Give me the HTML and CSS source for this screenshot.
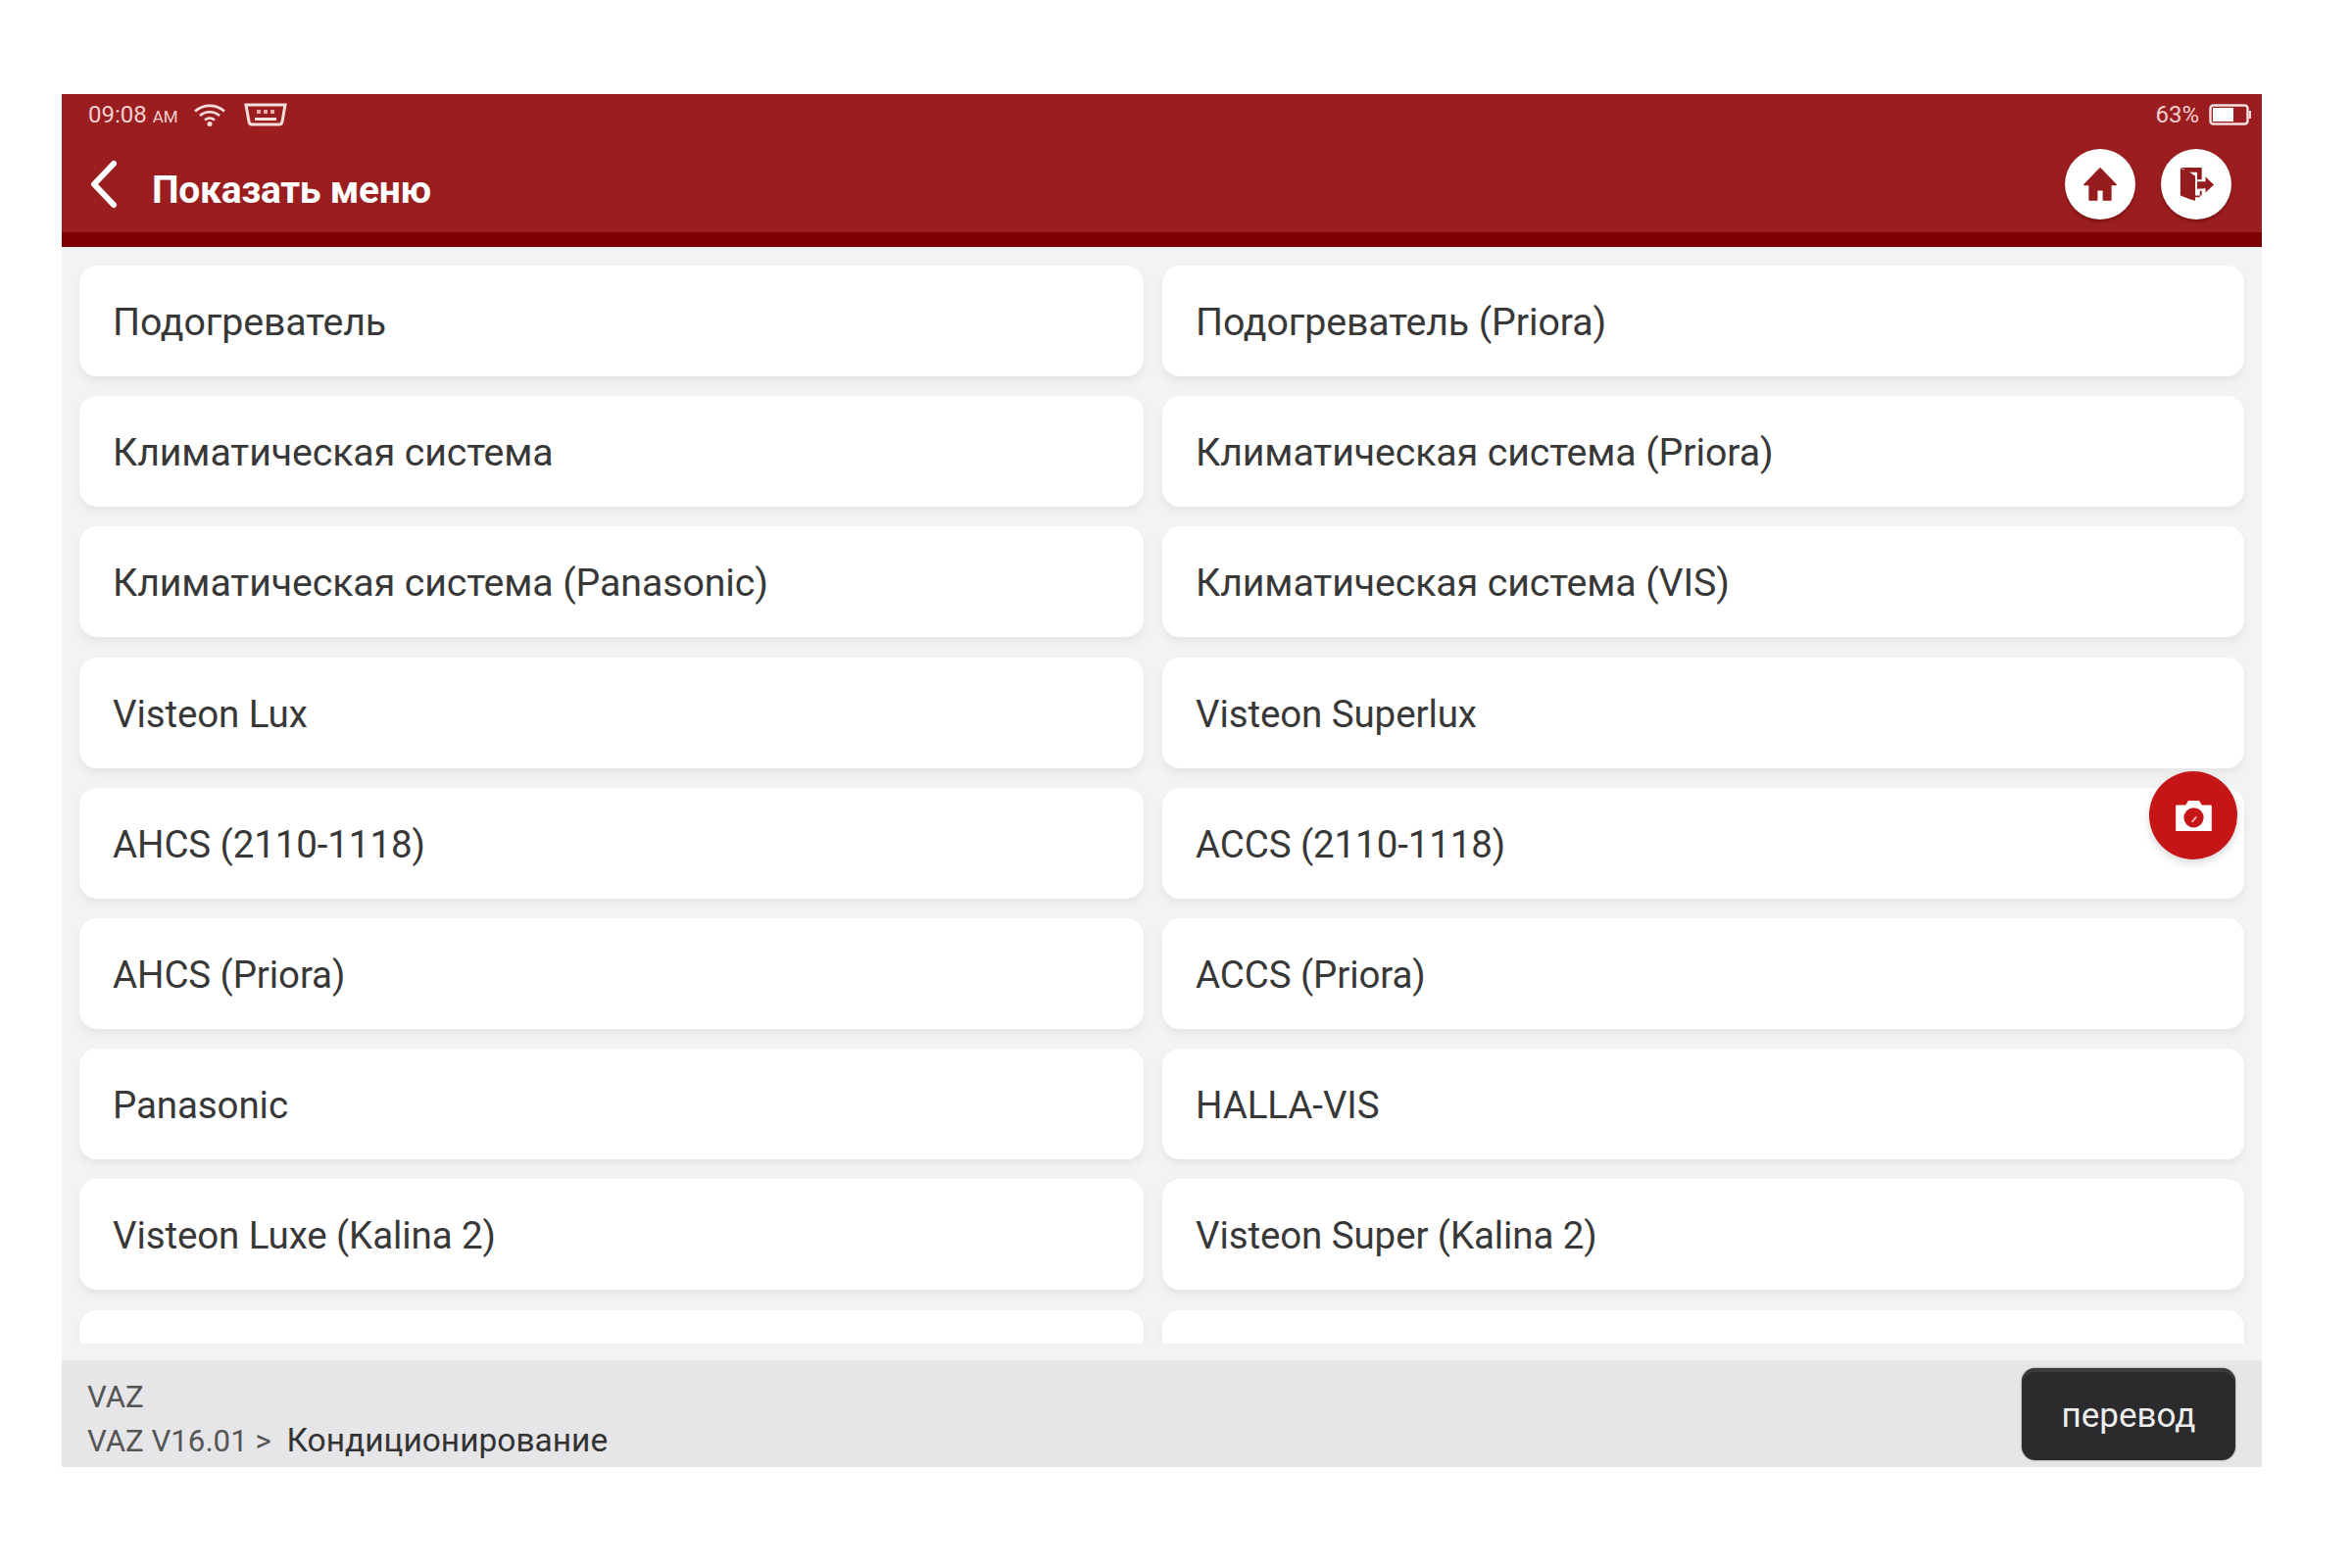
FILE: index.html
```html
<!DOCTYPE html>
<html lang="ru">
<head>
<meta charset="utf-8">
<title>Показать меню</title>
<link rel="stylesheet" href="styles.css">
</head>
<body>
<div class="app">
  <header class="header">
    <div class="status">
      <div class="status-group">
        <span class="time">09:08 <small>AM</small></span>
        <svg class="wifi" viewBox="0 0 34 24"><g fill="none" stroke="#f6dede" stroke-width="2.6"><path d="M2 8.500c9-7.500 21-7.500 30 0"/><path d="M7 13c6-5 14-5 20 0"/><path d="M12 17.500c3-2.500 7-2.500 10 0"/></g><circle cx="17" cy="21.500" r="2.500" fill="#f6dede"/></svg>
        <svg class="vci" viewBox="0 0 44 24"><path d="M2 2h40l-3 17q-.5 3-3 3H8q-2.500 0-3-3z" fill="none" stroke="#f6dede" stroke-width="3"/><path d="M11 15h22v3H11z" fill="#f6dede"/><path d="M13 7h4v4h-4zM20 7h4v4h-4zM27 7h4v4h-4z" fill="#e9aaaa"/></svg>
      </div>
      <div class="status-group">
        <span class="time">63%</span>
        <svg class="battery" viewBox="0 0 44 22"><rect x="1.500" y="1.500" width="38" height="19" rx="3" fill="none" stroke="#f6dede" stroke-width="2.500"/><rect x="4" y="4" width="21" height="14" fill="#fff"/><path d="M41 7h2v8h-2z" fill="#f6dede"/></svg>
      </div>
    </div>
    <div class="titlebar">
      <svg class="back" viewBox="0 0 30 50"><path d="M25 4 5 25l20 21" fill="none" stroke="#fff" stroke-width="6" stroke-linecap="round" stroke-linejoin="round"/></svg>
      <h1 class="title">Показать меню</h1>
      <div class="actions">
        <span class="round-btn"><svg viewBox="0 0 40 40"><path d="M20 3 3 20.500h5.500V37h8V26h7v11h8V20.500H37z" fill="#951c1e" stroke="#951c1e" stroke-width="1.500" stroke-linejoin="round"/></svg></span>
        <span class="round-btn"><svg viewBox="0 0 40 40"><path d="M3 2h23v13h-5V7H12l7 4v21h7v-5h-2v7h-5v4l-12-5V4z" fill="#951c1e"/><path d="M3 3l13 6v28L3 32z" fill="#951c1e"/><path d="M21 25v-8h9v-5l9 8.500-9 8.500v-4.500z" fill="#951c1e"/></svg></span>
      </div>
    </div>
  </header>
  <main class="main">
    <div class="list">
      <div class="card card-ru">Подогреватель</div><div class="card card-ru">Подогреватель (Priora)</div>
      <div class="card card-ru">Климатическая система</div><div class="card card-ru">Климатическая система (Priora)</div>
      <div class="card card-ru">Климатическая система (Panasonic)</div><div class="card card-ru">Климатическая система (VIS)</div>
      <div class="card">Visteon Lux</div><div class="card">Visteon Superlux</div>
      <div class="card">AHCS (2110-1118)</div><div class="card">ACCS (2110-1118)</div>
      <div class="card">AHCS (Priora)</div><div class="card">ACCS (Priora)</div>
      <div class="card">Panasonic</div><div class="card">HALLA-VIS</div>
      <div class="card">Visteon Luxe (Kalina 2)</div><div class="card">Visteon Super (Kalina 2)</div>
      <div class="card"></div><div class="card"></div>
    </div>
  </main>
  <footer class="footer">
    <div class="crumbs">
      <div>VAZ</div>
      <div>VAZ V16.01 &gt; <span class="crumb-current">Кондиционирование</span></div>
    </div>
    <button class="translate">перевод</button>
  </footer>
  <span class="camera"><svg viewBox="0 0 44 36"><path d="M3 6h10l3-5h12l3 5h10a1 1 0 0 1 1 1v27a1 1 0 0 1-1 1H3a1 1 0 0 1-1-1V7a1 1 0 0 1 1-1z" fill="#fff"/><circle cx="22" cy="20" r="11" fill="#c51517"/><path d="M20 25l5-6" stroke="#f3b0b0" stroke-width="2"/></svg></span>
</div>
</body>
</html>
```
FILE: styles.css
```css
* { box-sizing: border-box; }
html, body { margin: 0; background: #fff; }
body { padding: 96px 92px 103px 63px; font-family: Roboto, "Noto Sans", sans-serif; }
.app {
  position: relative;
  width: 2245px;
  height: 1401px;
  display: flex;
  flex-direction: column;
  background: #f3f3f4;
}
.header {
  height: 156px;
  flex: none;
  background: #9a1e1f;
  border-bottom: 15px solid #7d0000;
  color: #fff;
}
.status {
  height: 42px;
  padding: 0 10px 0 27px;
  display: flex;
  align-items: center;
  justify-content: space-between;
}
.status-group { display: flex; align-items: center; }
.time { font-size: 24px; color: #f3cfcf; }
.time small { font-size: 17px; }
.wifi { width: 34px; height: 24px; margin-left: 15px; }
.vci { width: 44px; height: 24px; margin-left: 18px; }
.battery { width: 44px; height: 22px; margin-left: 10px; }
.titlebar {
  height: 99px;
  display: flex;
  align-items: center;
  padding: 0 31px 0 28px;
}
.back { width: 30px; height: 50px; }
.title {
  margin: 12px 0 0 34px;
  font-size: 39px;
  font-weight: 700;
  letter-spacing: -0.3px;
}
.actions { margin-left: auto; display: flex; gap: 26px; }
.round-btn {
  width: 72px;
  height: 72px;
  border-radius: 50%;
  background: #fff;
  display: flex;
  align-items: center;
  justify-content: center;
  box-shadow: 0 2px 3px rgba(90, 0, 0, .5);
}
.round-btn svg { width: 38px; height: 38px; }
.main { flex: 1; padding: 0 0 17px; min-height: 0; }
.list {
  height: 100%;
  overflow: hidden;
  padding: 19px 18px 0;
  display: grid;
  grid-template-columns: 1086px 1104px;
  grid-auto-rows: 113px;
  column-gap: 19px;
  row-gap: 20.200px;
}
.card {
  display: flex;
  align-items: center;
  padding: 2px 34px 0;
  background: #fff;
  border-radius: 18px;
  font-size: 38.500px;
  letter-spacing: -0.1px;
  color: #383838;
  box-shadow: 0 5px 8px rgba(0, 0, 0, .06);
}
.card-ru { font-size: 39.300px; }
.footer {
  height: 109px;
  flex: none;
  background: #e6e6e8;
  padding: 6px 27px 6px 26px;
  display: flex;
  align-items: center;
  justify-content: space-between;
}
.crumbs { font-size: 31.200px; line-height: 44px; color: #555; padding-top: 12px; }
.crumb-current { font-size: 33.500px; color: #333; margin-left: 8px; }
.translate {
  width: 218px;
  height: 94px;
  padding-top: 4px;
  border: 0;
  border-radius: 14px;
  background: #2b2b2d;
  color: #eee;
  font: 35px Roboto, sans-serif;
  box-shadow: inset 0 4px 0 #3c3c3e, 0 0 2px rgba(0, 0, 0, .5);
}
.camera {
  position: absolute;
  left: 2130px;
  top: 691px;
  width: 90px;
  height: 90px;
  border-radius: 50%;
  background: #c51517;
  display: flex;
  align-items: center;
  justify-content: center;
  box-shadow: 0 4px 8px rgba(0, 0, 0, .15);
}
.camera svg { width: 41px; height: 33px; }
```
